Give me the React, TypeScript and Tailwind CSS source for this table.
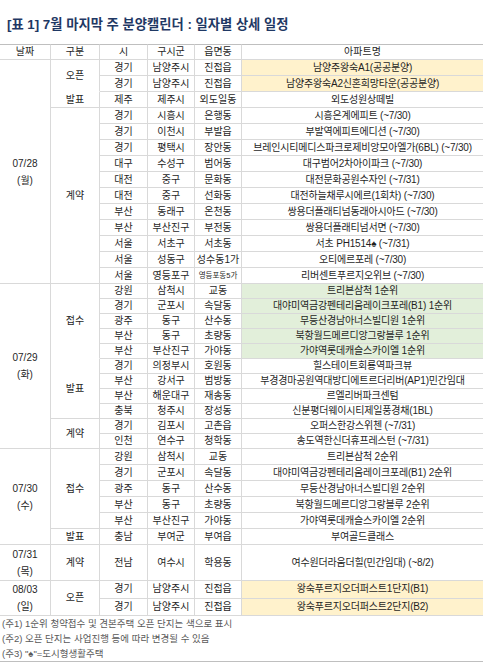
type Row = [string, string, string, string, ("y" | "g")?, boolean?];

type Cat = { label: string; rows: Row[]; open?: boolean };

type Group = { date: string; day: string; h: string; cats: Cat[] };

const groups: Group[] = [
  {
    date: "07/28",
    day: "(월)",
    h: "h-[16px]",
    cats: [
      {
        label: "오픈",
        open: true,
        rows: [
          ["경기", "남양주시", "진접읍", "남양주왕숙A1(공공분양)", "y"],
          ["경기", "남양주시", "진접읍", "남양주왕숙A2신혼희망타운(공공분양)", "y"],
        ],
      },
      { label: "발표", rows: [["제주", "제주시", "외도일동", "외도성원상떼빌"]] },
      {
        label: "계약",
        rows: [
          ["경기", "시흥시", "은행동", "시흥은계에피트 (~7/30)"],
          ["경기", "이천시", "부발읍", "부발역에피트에디션 (~7/30)"],
          ["경기", "평택시", "장안동", "브레인시티메디스파크로제비앙모아엘가(6BL) (~7/30)"],
          ["대구", "수성구", "범어동", "대구범어2차아이파크 (~7/30)"],
          ["대전", "중구", "문화동", "대전문화공원수자인 (~7/31)"],
          ["대전", "중구", "선화동", "대전하늘채루시에르(1회차) (~7/30)"],
          ["부산", "동래구", "온천동", "쌍용더플래티넘동래아시아드 (~7/30)"],
          ["부산", "부산진구", "부전동", "쌍용더플래티넘서면 (~7/30)"],
          ["서울", "서초구", "서초동", "서초 PH1514♠ (~7/31)"],
          ["서울", "성동구", "성수동1가", "오티에르포레 (~7/30)"],
          ["서울", "영등포구", "영등포동5가", "리버센트푸르지오위브 (~7/30)", undefined, true],
        ],
      },
    ],
  },
  {
    date: "07/29",
    day: "(화)",
    h: "h-[15px]",
    cats: [
      {
        label: "접수",
        open: true,
        rows: [
          ["강원", "삼척시", "교동", "트리븐삼척 1순위", "g"],
          ["경기", "군포시", "속달동", "대야미역금강펜테리움레이크포레(B1) 1순위", "g"],
          ["광주", "동구", "산수동", "무등산경남아너스빌디원 1순위", "g"],
          ["부산", "동구", "초량동", "북항월드메르디앙그랑블루 1순위", "g"],
          ["부산", "부산진구", "가야동", "가야역롯데캐슬스카이엘 1순위", "g"],
        ],
      },
      {
        label: "발표",
        rows: [
          ["경기", "의정부시", "호원동", "힐스테이트회룡역파크뷰"],
          ["부산", "강서구", "범방동", "부경경마공원역대방디에트르더리버(AP1)민간임대"],
          ["부산", "해운대구", "재송동", "르엘리버파크센텀"],
          ["충북", "청주시", "장성동", "신분평더웨이시티제일풍경채(1BL)"],
        ],
      },
      {
        label: "계약",
        rows: [
          ["경기", "김포시", "고촌읍", "오퍼스한강스위첸 (~7/31)"],
          ["인천", "연수구", "청학동", "송도역한신더휴프레스턴 (~7/31)"],
        ],
      },
    ],
  },
  {
    date: "07/30",
    day: "(수)",
    h: "h-[16px]",
    cats: [
      {
        label: "접수",
        rows: [
          ["강원", "삼척시", "교동", "트리븐삼척 2순위"],
          ["경기", "군포시", "속달동", "대야미역금강펜테리움레이크포레(B1) 2순위"],
          ["광주", "동구", "산수동", "무등산경남아너스빌디원 2순위"],
          ["부산", "동구", "초량동", "북항월드메르디앙그랑블루 2순위"],
          ["부산", "부산진구", "가야동", "가야역롯데캐슬스카이엘 2순위"],
        ],
      },
      { label: "발표", rows: [["충남", "부여군", "부여읍", "부여골드클래스"]] },
    ],
  },
  {
    date: "07/31",
    day: "(목)",
    h: "h-[36px]",
    cats: [{ label: "계약", rows: [["전남", "여수시", "학용동", "여수원더라움더힐(민간임대) (~8/2)"]] }],
  },
  {
    date: "08/03",
    day: "(일)",
    h: "h-[17px]",
    cats: [
      {
        label: "오픈",
        rows: [
          ["경기", "남양주시", "진접읍", "왕숙푸르지오더퍼스트1단지(B1)", "y"],
          ["경기", "남양주시", "진접읍", "왕숙푸르지오더퍼스트2단지(B2)", "y"],
        ],
      },
    ],
  },
];

const cell = "border-r border-b border-[#d9d9d9] p-0 text-center align-middle whitespace-nowrap";

export default function App() {
  return (
    <div
      className="w-[483px] h-[663px] bg-white overflow-hidden text-[#1f1f1f]"
      style={{ fontFamily: '"Liberation Sans", "Noto Sans CJK KR", sans-serif' }}
    >
      <div className="h-[44px] pt-[16px] pl-[7px] text-[13.3px] font-bold text-[#1f3864] leading-[18px]">
        [표 1] 7월 마지막 주 분양캘린더 : 일자별 상세 일정
      </div>

      <table className="w-[483px] table-fixed border-separate border-spacing-0 text-[10px] leading-none">
        <colgroup>
          <col className="w-[51px]" />
          <col className="w-[49px]" />
          <col className="w-[48px]" />
          <col className="w-[47px]" />
          <col className="w-[47px]" />
          <col />
        </colgroup>
        <thead>
          <tr className="h-[16px]">
            {["날짜", "구분", "시", "구시군", "읍면동", "아파트명"].map((t, i) => (
              <th
                key={t}
                className={`border-t border-t-[#bfbfbf] border-b border-[#d9d9d9] p-0 font-normal text-center ${
                  i < 5 ? "border-r" : ""
                }`}
              >
                {t}
              </th>
            ))}
          </tr>
        </thead>
        <tbody>
          {groups.map((g) => {
            const total = g.cats.reduce((n, c) => n + c.rows.length, 0);
            return g.cats.map((c, ci) =>
              c.rows.map((r, ri) => (
                <tr key={g.date + c.label + ri} className={g.h}>
                  {ci === 0 && ri === 0 && (
                    <td rowSpan={total} className={`${cell} leading-[17px]`}>
                      {g.date}
                      <br />
                      {g.day}
                    </td>
                  )}
                  {ri === 0 && (
                    <td
                      rowSpan={c.rows.length}
                      className={`${cell} ${c.open ? "border-b-transparent" : ""}`}
                    >
                      {c.label}
                    </td>
                  )}
                  <td className={cell}>{r[0]}</td>
                  <td className={cell}>{r[1]}</td>
                  <td className={`${cell} ${r[5] ? "text-[7.5px]" : ""}`}>{r[2]}</td>
                  <td
                    className={`border-b border-[#d9d9d9] p-0 text-center align-middle whitespace-nowrap tracking-[-0.2px] ${
                      r[4] === "y" ? "bg-[#fff2cc]" : r[4] === "g" ? "bg-[#e2efda]" : ""
                    }`}
                  >
                    {r[3]}
                  </td>
                </tr>
              ))
            );
          })}
        </tbody>
      </table>

      <div className="pl-[2px] text-[9.5px] leading-[15px] text-[#595959] border-b border-[#bfbfbf]">
        <div>(주1) 1순위 청약접수 및 견본주택 오픈 단지는 색으로 표시</div>
        <div>(주2) 오픈 단지는 사업진행 등에 따라 변경될 수 있음</div>
        <div>(주3) "♠"=도시형생활주택</div>
      </div>
    </div>
  );
}
